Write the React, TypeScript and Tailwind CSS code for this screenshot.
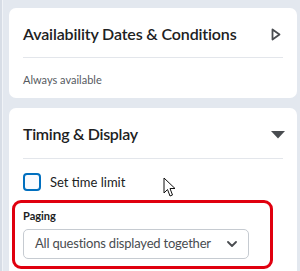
import React from 'react';

function Cursor() {
  return (
    <svg width="14" height="21" viewBox="0 0 14 21" className="absolute left-[163px] top-[177px]">
      <path d="M1 1 L1 16 L4.5 12.5 L7 19 L9.5 18 L7 11.5 L12 11.5 Z" fill="#fff" stroke="#111" strokeWidth="1" strokeLinejoin="round" />
    </svg>
  );
}

export default function App() {
  return (
    <div className="relative w-[300px] h-[271px] overflow-hidden bg-[#e3e8ef] font-['Lato','Liberation_Sans',sans-serif] text-[#202122]">
      <div className="absolute left-0 top-0 h-full w-[3px] bg-[#d7dde6] border-r border-[#f0f3f7]" />
      <div className="pl-[9px] pr-[3px] pt-[8px] flex flex-col gap-[10px]">
        <div className="bg-white rounded-[7px] h-[90px] px-[14px] pt-[17px]">
          <div className="flex items-center justify-between">
            <h2 className="text-[16px] font-semibold leading-[18px] tracking-[-0.15px]">Availability Dates &amp; Conditions</h2>
            <svg width="10" height="13" viewBox="0 0 10 13" className="mr-[2px]">
              <path d="M1.5 1.5 L8.5 6.5 L1.5 11.5 Z" fill="none" stroke="#494c50" strokeWidth="1.8" strokeLinejoin="round" />
            </svg>
          </div>
          <div className="mt-[14px] border-t border-[#e3e6eb]" />
          <p className="mt-[15px] text-[11px] leading-[13px] text-[#565a5f]">Always available</p>
        </div>
        <div className="bg-white rounded-[7px] h-[200px] pl-[14px] pr-[12px] pt-[17px]">
          <div className="flex items-center justify-between">
            <h2 className="text-[16px] font-semibold leading-[18px] tracking-[-0.3px]">Timing &amp; Display</h2>
            <svg width="14" height="8" viewBox="0 0 14 8" className="mt-[2px]">
              <path d="M0 0 L14 0 L7 7.5 Z" fill="#494c50" />
            </svg>
          </div>
          <div className="mt-[15px] mr-[2px] border-t border-[#e3e6eb]" />
          <label className="mt-[14px] flex items-center gap-[9px]">
            <span className="w-[18px] h-[18px] rounded-[4px] border-2 border-[#006fbf] bg-[#f9fbff]" />
            <span className="text-[13px] leading-[16px] text-[#202122]">Set time limit</span>
          </label>
          <div className="mt-[9px] -ml-[11px] w-[261px] h-[69px] border-[3px] border-[#e0000f] rounded-[9px] pl-[8px] pt-[6px]">
            <div className="text-[11px] font-bold leading-[13px] text-[#202122]">Paging</div>
            <div className="mt-[7px] w-[226px] h-[30px] rounded-[5px] border border-[#c6cbd1] flex items-center justify-between pl-[11px] pr-[11px]">
              <span className="text-[13px] tracking-[-0.2px] whitespace-nowrap text-[#494c50]">All questions displayed together</span>
              <svg width="10" height="6" viewBox="0 0 10 6">
                <path d="M1 1 L5 5 L9 1" fill="none" stroke="#494c50" strokeWidth="1.8" strokeLinecap="round" strokeLinejoin="round" />
              </svg>
            </div>
          </div>
        </div>
      </div>
      <Cursor />
    </div>
  );
}
